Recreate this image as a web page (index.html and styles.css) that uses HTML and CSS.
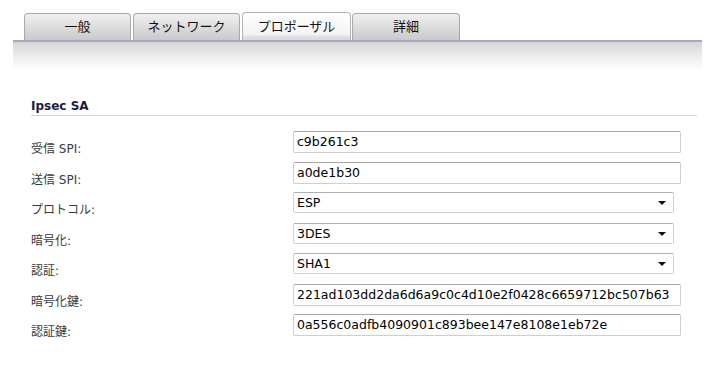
FILE: index.html
```html
<!DOCTYPE html>
<html lang="ja">
<head>
<meta charset="utf-8">
<title>Ipsec SA</title>
<link rel="stylesheet" href="styles.css">
</head>
<body>
<div class="page">
  <div class="tabs">
    <div class="tab t1">一般</div>
    <div class="tab t2">ネットワーク</div>
    <div class="tab t3 active">プロポーザル</div>
    <div class="tab t4">詳細</div>
  </div>
  <div class="bar"></div>
  <div class="content">
    <h2 class="section">Ipsec SA</h2>
    <div class="form">
      <div class="row"><span class="label">受信 SPI:</span><div class="input">c9b261c3</div></div>
      <div class="row"><span class="label">送信 SPI:</span><div class="input">a0de1b30</div></div>
      <div class="row"><span class="label">プロトコル:</span><div class="select">ESP<span class="arrow"></span></div></div>
      <div class="row"><span class="label">暗号化:</span><div class="select">3DES<span class="arrow"></span></div></div>
      <div class="row"><span class="label">認証:</span><div class="select">SHA1<span class="arrow"></span></div></div>
      <div class="row"><span class="label">暗号化鍵:</span><div class="input">221ad103dd2da6d6a9c0c4d10e2f0428c6659712bc507b63</div></div>
      <div class="row"><span class="label">認証鍵:</span><div class="input">0a556c0adfb4090901c893bee147e8108e1eb72e</div></div>
    </div>
  </div>
</div>
</body>
</html>
```
FILE: styles.css
```css
html, body {
  margin: 0;
  padding: 0;
  background: #fff;
}
body {
  font-family: "DejaVu Sans", "Noto Sans CJK JP", sans-serif;
  color: #000;
}
.page {
  width: 708px;
  height: 371px;
  overflow: hidden;
}
.tabs {
  display: flex;
  padding: 13px 0 0 24px;
  height: 27px;
  box-sizing: content-box;
}
.tab {
  box-sizing: border-box;
  height: 27px;
  border: 1px solid #a9a9a9;
  border-bottom: none;
  border-radius: 4px 4px 0 0;
  background: linear-gradient(#f0f0f0, #c9c9c9);
  font-family: "Noto Sans CJK JP", sans-serif;
  font-size: 13px;
  line-height: 24px;
  text-align: center;
  color: #111;
}
.t1 { width: 107px; margin-right: 2px; }
.t2 { width: 107px; margin-right: 2px; }
.t3 { width: 109px; margin-right: 1px; }
.t4 { width: 108px; }
.tab.active {
  background: linear-gradient(#ffffff, #f3f3f3 80%, #dcdde8 88%, #d8dae8);
  border-color: #b4b4b4;
  margin-top: -1px;
  height: 28px;
  line-height: 26px;
}
.bar {
  margin: 0 6px 0 13px;
  height: 28px;
  border-top: 2px solid #aaa6bb;
  background: linear-gradient(#d6d6d6, #ececec 50%, #ffffff);
}
.content {
  padding: 0 11px 0 31px;
}
.section {
  margin: 29px 0 0 0;
  padding: 0 0 1px 0;
  font-family: "DejaVu Sans", sans-serif;
  font-weight: bold;
  font-size: 12px;
  line-height: 15px;
  color: #1c1c3c;
  border-bottom: 1px solid #c9d9e8;
}
.form {
  padding-top: 15px;
}
.row {
  display: flex;
  height: 30.5px;
}
.label {
  width: 262px;
  padding-top: 8px;
  font-family: "DejaVu Sans", "Noto Sans CJK JP", sans-serif;
  font-size: 12px;
  color: #3a3a3a;
}
.input, .select {
  box-sizing: border-box;
  height: 22px;
  border: 1px solid #cfcfcf;
  border-top-color: #a8a8a8;
  border-radius: 2px;
  padding: 0 0 0 3px;
  font-size: 12.5px;
  line-height: 20px;
  color: #000;
  white-space: nowrap;
}
.input { width: 388px; }
.select {
  width: 381px;
  height: 21px;
  line-height: 19px;
  position: relative;
  border-color: #d2d2d2;
  border-top-color: #b0b0b0;
}
.arrow {
  position: absolute;
  right: 7px;
  top: 8px;
  width: 0;
  height: 0;
  border-left: 4px solid transparent;
  border-right: 4px solid transparent;
  border-top: 4px solid #111;
}
```
